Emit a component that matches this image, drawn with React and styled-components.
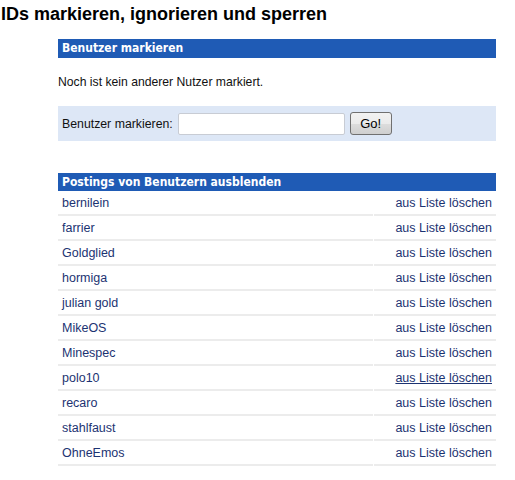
import React from "react";
import styled, { createGlobalStyle } from "styled-components";

const Global = createGlobalStyle`
  html, body { margin: 0; padding: 0; background: #fff; }
  body { font-family: "Liberation Sans", Arial, sans-serif; font-size: 12px; color: #111; }
`;

const Page = styled.div`
  padding: 3px 0 0 0;
`;

const Title = styled.h1`
  margin: 0 0 0 1px;
  font-family: "Liberation Sans", Arial, sans-serif;
  font-size: 18px;
  font-weight: bold;
  line-height: 22px;
  color: #000;
`;

const Content = styled.div`
  margin: 14px 0 0 58px;
  width: 438px;
`;

const Section = styled.section`
  margin-top: ${(p) => p.$top || 0}px;
`;

const BarHeader = styled.h2`
  margin: 0;
  height: ${(p) => p.$h || 19}px;
  line-height: ${(p) => p.$h || 19}px;
  padding: 0 4px;
  background: #1f5bb5;
  color: #fff;
  font-family: "DejaVu Sans Condensed", "DejaVu Sans", Verdana, sans-serif;
  font-size: 12px;
  font-weight: bold;
`;

const Note = styled.p`
  margin: 0;
  padding: 17px 0 0 0;
  height: 48px;
  box-sizing: border-box;
  line-height: 14px;
  font-size: 12.2px;
  color: #111;
`;

const FormBox = styled.form`
  display: flex;
  align-items: center;
  height: 35px;
  padding: 0 4px;
  background: #dde7f6;
`;

const Label = styled.label`
  font-size: 12.3px;
  color: #111;
  margin-right: 5px;
`;

const TextInput = styled.input`
  width: 167px;
  height: 22px;
  box-sizing: border-box;
  border: 1px solid #c8ccd4;
  border-radius: 2px;
  background: #fff;
  padding: 0 3px;
  margin: 0 5px 0 0;
  font-family: "Liberation Sans", Arial, sans-serif;
  font-size: 12px;
`;

const GoButton = styled.button`
  width: 42px;
  height: 23px;
  margin: 0;
  padding: 0;
  border: 1px solid #707070;
  border-radius: 3px;
  background: linear-gradient(#f2f2f2 0%, #ebebeb 50%, #dddddd 51%, #cfcfcf 100%);
  font-family: "Liberation Sans", Arial, sans-serif;
  font-size: 13px;
  color: #000;
`;

const List = styled.div`
  display: flex;
  flex-direction: column;
`;

const Row = styled.div`
  display: grid;
  grid-template-columns: 315px 1fr;
  column-gap: 1px;
`;

const Cell = styled.div`
  height: 21px;
  line-height: 21px;
  padding: 2px 4px 0;
  border-bottom: 2px solid #ececec;
  text-align: ${(p) => (p.$right ? "right" : "left")};
`;

const Link = styled.a`
  font-family: "Liberation Sans", Arial, sans-serif;
  font-size: 12.5px;
  color: #1c3372;
  text-decoration: ${(p) => (p.$hover ? "underline" : "none")};
  cursor: pointer;
`;

const users = [
  "bernilein",
  "farrier",
  "Goldglied",
  "hormiga",
  "julian gold",
  "MikeOS",
  "Minespec",
  "polo10",
  "recaro",
  "stahlfaust",
  "OhneEmos",
];

export default function App() {
  return (
    <Page>
      <Global />
      <Title>IDs markieren, ignorieren und sperren</Title>
      <Content>
        <Section>
          <BarHeader $h={19}>Benutzer markieren</BarHeader>
          <Note>Noch ist kein anderer Nutzer markiert.</Note>
          <FormBox onSubmit={(e) => e.preventDefault()}>
            <Label htmlFor="mark-user">Benutzer markieren:</Label>
            <TextInput id="mark-user" type="text" />
            <GoButton type="submit">Go!</GoButton>
          </FormBox>
        </Section>
        <Section $top={32}>
          <BarHeader $h={18}>Postings von Benutzern ausblenden</BarHeader>
          <List>
            {users.map((name) => (
              <Row key={name}>
                <Cell>
                  <Link>{name}</Link>
                </Cell>
                <Cell $right>
                  <Link $hover={name === "polo10"}>aus Liste löschen</Link>
                </Cell>
              </Row>
            ))}
          </List>
        </Section>
      </Content>
    </Page>
  );
}
